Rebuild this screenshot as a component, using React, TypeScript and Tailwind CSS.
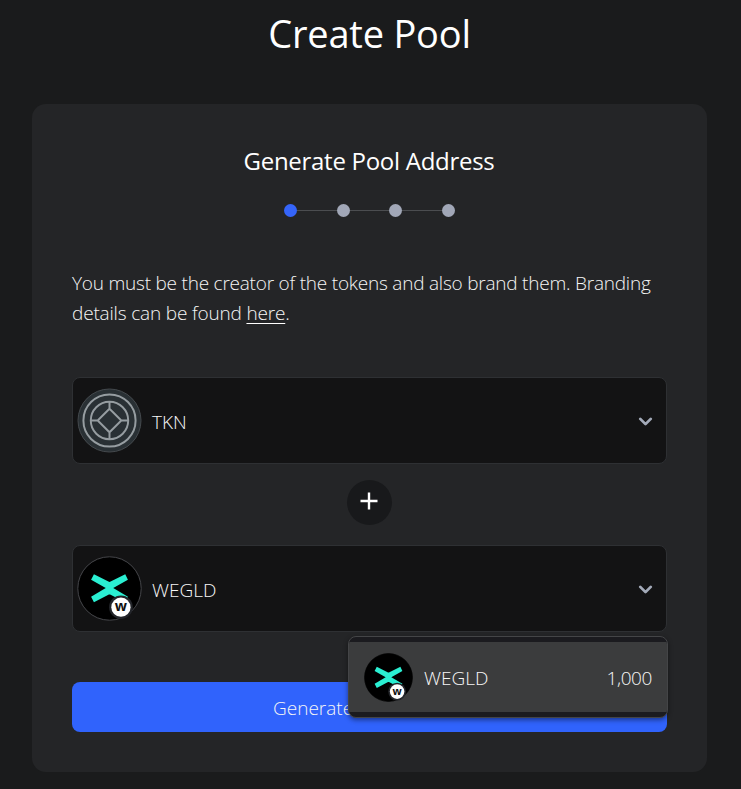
import { ChevronDown } from "lucide-react";

function TknLogo() {
  return (
    <svg className="size-[65px] shrink-0" viewBox="0 0 66 66" fill="none" stroke="#969da1" strokeWidth="2">
      <circle cx="33" cy="33" r="32" fill="#293034" stroke="#454a4e" strokeWidth="1" />
      <circle cx="33" cy="33" r="26.5" />
      <circle cx="33" cy="33" r="19" />
      <path d="M33 21 45 33 33 45 21 33ZM33 14v7M45 33h7M33 45v7M14 33h7" />
    </svg>
  );
}

function WegldLogo({ className, ring }: { className: string; ring: string }) {
  return (
    <svg className={className} viewBox="0 0 66 66">
      <circle cx="33" cy="33" r="32.2" fill="#000" stroke={ring} strokeWidth="1" />
      <path
        d="M17.2 18.6 32.4 26.2Q33 26.5 33.6 26.2L49 18.6 51.7 24.2 36.8 32.6 51.7 41.3 49 47 33.6 39.2Q33 38.9 32.4 39.2L17.2 47 14.3 41.3 29.2 32.6 14.3 24.2Z"
        fill="#2aefd2"
      />
      <circle cx="44.6" cy="52" r="12" fill="#23252a" />
      <circle cx="44.6" cy="52" r="9.8" fill="#fff" />
      <text
        x="44.6"
        y="56.1"
        textAnchor="middle"
        fill="#111"
        className="font-['Open_Sans',sans-serif] text-[14.5px] font-bold"
      >
        w
      </text>
    </svg>
  );
}

function Select({ logo, name }: { logo: React.ReactNode; name: string }) {
  return (
    <div className="flex h-[87px] items-center rounded-lg border border-[#2e3033] bg-[#131314] pr-[10px] pl-1">
      {logo}
      <span className="ml-[10px] grow pt-[3px] text-[19px]">{name}</span>
      <ChevronDown className="mt-px size-[21px] text-[#a3aab9]" strokeWidth={3.2} />
    </div>
  );
}

export default function App() {
  return (
    <div className="h-[789px] overflow-hidden bg-[#1a1b1c] pr-[34px] pl-8 font-['Open_Sans','Noto_Sans',sans-serif] font-light text-[#f6f6f6]">
      <h1 className="h-[104px] pt-2 text-center text-[38px] leading-[50px] font-normal tracking-[-0.2px] text-white">
        Create Pool
      </h1>
      <main className="h-[668px] rounded-[14px] bg-[#242527] px-10 pt-10">
        <h2 className="pr-px text-center text-[24px] leading-[34px] font-normal tracking-[-0.28px] text-white">
          Generate Pool Address
        </h2>
        <div className="mt-[26px] flex items-center justify-center">
          <i className="size-[13px] rounded-full bg-[#3565fa]" />
          {[1, 2, 3].map((n) => (
            <span key={n} className="flex items-center">
              <i className="h-px w-[39.5px] bg-[#4b4d50]" />
              <i className="size-[13px] rounded-full bg-[#a1a7b7]" />
            </span>
          ))}
        </div>
        <p className="mt-[51px] text-[19px] leading-[30px] tracking-[-0.22px] whitespace-nowrap">
          You must be the creator of the tokens and also brand them. Branding
          <br />
          <span className="tracking-[-0.17px]">
            details can be found{" "}
            <a className="underline decoration-white decoration-1 underline-offset-[3px]">here</a>.
          </span>
        </p>
        <section className="mt-[49px]">
          <Select logo={<TknLogo />} name="TKN" />
          <div className="mx-auto my-4 flex h-[49px] items-start justify-center">
            <div className="flex size-[45px] items-center justify-center rounded-full bg-[#18191b]">
              <svg className="mr-px mb-[3px] size-[18px]" viewBox="0 0 18 18" stroke="#fff" strokeWidth="2.4">
                <path d="M9 .5v17M.5 9h17" />
              </svg>
            </div>
          </div>
          <div className="relative">
            <Select logo={<WegldLogo className="size-[65px] shrink-0" ring="#46474b" />} name="WEGLD" />
            <div className="absolute top-[91px] -right-px h-[82px] w-[320px] overflow-hidden rounded-lg border border-[#444547] bg-[#1b1b1f] py-[5px] shadow-[0_2px_5px_rgba(0,0,0,0.45)]">
              <div className="flex h-[70px] items-center bg-[#3b3c3d] px-[15px]">
                <WegldLogo className="size-[49px] shrink-0" ring="#000" />
                <span className="ml-[11px] grow pt-[3px] text-[19px]">WEGLD</span>
                <span className="pt-[3px] text-[19px] tracking-[-0.4px]">1,000</span>
              </div>
            </div>
          </div>
          <button className="mt-[50px] block h-[50px] w-full rounded-lg bg-[#3063fc] pt-[3px] pl-[201px] text-left text-[19px] font-light">
            Generate
          </button>
        </section>
      </main>
    </div>
  );
}
